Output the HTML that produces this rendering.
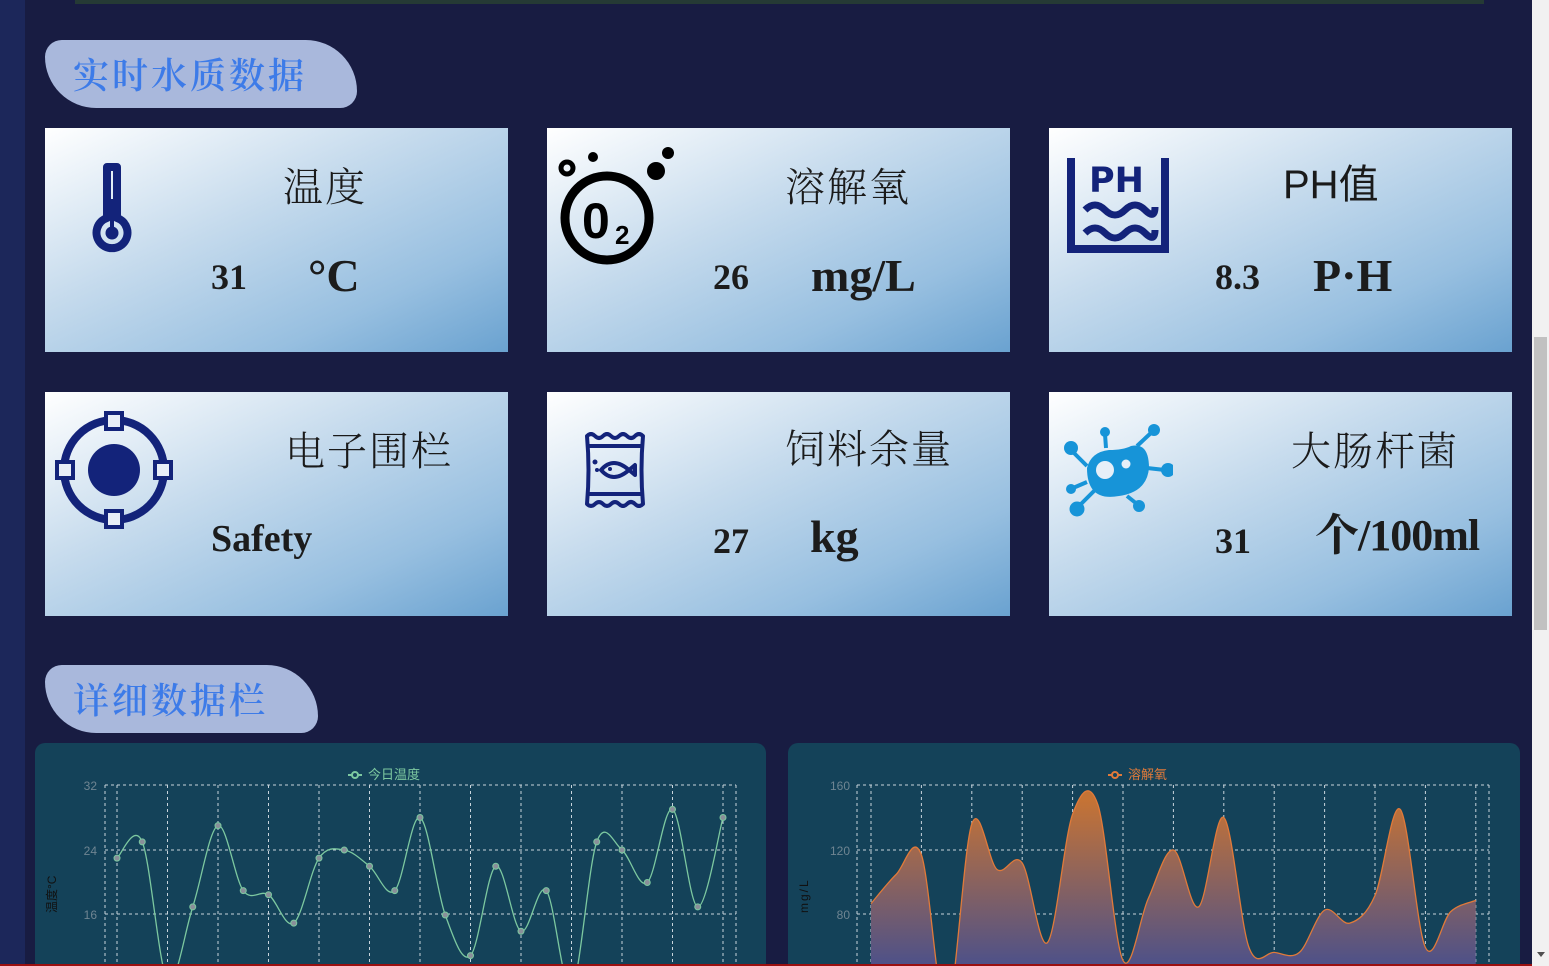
<!DOCTYPE html>
<html><head><meta charset="utf-8">
<style>
*{margin:0;padding:0;box-sizing:border-box}
html{width:1549px;height:966px;overflow:hidden}
body{width:1549px;height:966px;overflow:hidden;background:#181c42;position:relative;font-family:"Liberation Serif","Noto Serif CJK SC",serif}
.side{position:absolute;left:0;top:0;width:25px;height:966px;background:#1c275a}
.topimg{position:absolute;left:75px;top:0;width:1409px;height:4px;background:#253a35}
.scroll{position:absolute;left:1532px;top:0;width:17px;height:966px;background:#f1f1f1}
.thumb{position:absolute;left:1534px;top:337px;width:13px;height:293px;background:#c1c1c1}
.pill{position:absolute;background:#a9b8dc;color:#3d7be8;font-family:"Noto Serif CJK SC",serif;font-weight:600;font-size:36px;letter-spacing:3px;border-radius:18px 55px 18px 55px/18px 55px 18px 55px;padding-left:28px;line-height:68px;height:68px}
.card{position:absolute;width:463px;height:224px;background:linear-gradient(155deg,#ffffff 0%,#c6dbed 40%,#97bfe0 75%,#6aa2d0 100%);overflow:hidden}
.t{position:absolute;font-family:"Noto Serif CJK SC",serif;font-size:40px;color:#1a1a1a;letter-spacing:2px;line-height:1;font-weight:300}
.n{position:absolute;font-weight:bold;font-size:36px;color:#1c1c1c;line-height:1}
.u{position:absolute;font-weight:bold;font-size:46px;color:#1c1c1c;line-height:1}
.ic{position:absolute}
.panel{position:absolute;top:743px;height:223px;background:#144259;border-radius:10px 10px 0 0}
.red{position:absolute;left:0;top:964px;width:1532px;height:2px;background:#9a1010}
</style></head><body>
<div class="side"></div>
<div class="topimg"></div>

<div class="pill" style="left:45px;top:40px;width:312px">实时水质数据</div>

<div class="card" style="left:45px;top:128px">
<svg class="ic" style="left:45px;top:35px" width="44" height="92" viewBox="0 0 44 92"><path d="M17 4h10v51a15.5 15.5 0 1 1 -10 0z" fill="none" stroke="#13237a" stroke-width="8" stroke-linejoin="round"/><rect x="20" y="36" width="4" height="30" fill="#13237a"/><circle cx="22" cy="70" r="6.5" fill="#13237a"/></svg>
<div class="t" style="left:238px;top:37px">温度</div>
<div class="n" style="left:166px;top:131px">31</div>
<div class="u" style="left:263px;top:125px">°C</div>
</div>
<div class="card" style="left:547px;top:128px">
<svg class="ic" style="left:10px;top:18px" width="120" height="122" viewBox="0 0 120 122"><circle cx="10" cy="22" r="6" fill="none" stroke="#000" stroke-width="5"/><circle cx="36" cy="11" r="5" fill="#000"/><circle cx="99" cy="25" r="9" fill="#000"/><circle cx="111" cy="7" r="6" fill="#000"/><circle cx="50" cy="72" r="42" fill="none" stroke="#000" stroke-width="9"/><text x="25" y="92" font-family="Liberation Sans,sans-serif" font-size="50" font-weight="bold" transform="scale(1,1)">0</text><text x="58" y="98" font-family="Liberation Sans,sans-serif" font-size="26" font-weight="bold">2</text></svg>
<div class="t" style="left:238px;top:37px">溶解氧</div>
<div class="n" style="left:166px;top:131px">26</div>
<div class="u" style="left:264px;top:125px">mg/L</div>
</div>
<div class="card" style="left:1049px;top:128px">
<svg class="ic" style="left:18px;top:30px" width="102" height="96" viewBox="0 0 102 96"><path d="M4 0v91h94V0" fill="none" stroke="#13237a" stroke-width="8"/><text x="22" y="34" font-family="DejaVu Sans,sans-serif" font-size="35" font-weight="bold" fill="#13237a">PH</text><path d="M18 52q10-10 20 0t20 0t20 0t10-3M18 75q10-10 20 0t20 0t20 0t10-3" fill="none" stroke="#13237a" stroke-width="7"/></svg>
<div class="t" style="left:234px;top:37px;font-family:'Liberation Sans','Noto Sans CJK SC',sans-serif;font-weight:400;letter-spacing:0">PH值</div>
<div class="n" style="left:166px;top:131px">8.3</div>
<div class="u" style="left:264px;top:125px">P·H</div>
</div>

<div class="card" style="left:45px;top:392px">
<svg class="ic" style="left:10px;top:19px" width="118" height="118" viewBox="0 0 118 118"><circle cx="59" cy="59" r="50" fill="none" stroke="#13237a" stroke-width="8"/><circle cx="59" cy="59" r="26" fill="#13237a"/><g fill="#e8eef7" stroke="#13237a" stroke-width="4"><rect x="51" y="2" width="16" height="16"/><rect x="51" y="100" width="16" height="16"/><rect x="2" y="51" width="16" height="16"/><rect x="100" y="51" width="16" height="16"/></g></svg>
<div class="t" style="left:240px;top:37px">电子围栏</div>
<div class="u" style="left:166px;top:128px;font-size:38px">Safety</div>
</div>
<div class="card" style="left:547px;top:392px">
<svg class="ic" style="left:36px;top:40px" width="66" height="76" viewBox="0 0 66 76"><g fill="none" stroke="#13237a" stroke-width="4" stroke-linejoin="round"><path d="M4 4q4-4 8 0t8 0t8 0t8 0t8 0t8 0t8 0q-3 34 0 68q-4 4-8 0t-8 0t-8 0t-8 0t-8 0t-8 0t-8 0q3-34 0-68z"/><path d="M5 14h56M5 62h56"/><path d="M18 38q12-14 28 0l6-5v10l-6-5q-16 14-28 0z"/></g><circle cx="12" cy="30" r="2.5" fill="#13237a"/><circle cx="14" cy="38" r="2" fill="#13237a"/><circle cx="27" cy="37" r="2" fill="#13237a"/></svg>
<div class="t" style="left:238px;top:35px">饲料余量</div>
<div class="n" style="left:166px;top:131px">27</div>
<div class="u" style="left:263px;top:122px">kg</div>
</div>
<div class="card" style="left:1049px;top:392px">
<svg class="ic" style="left:14px;top:30px" width="110" height="96" viewBox="0 0 110 96"><g stroke="#1794d8" stroke-width="4" fill="none"><path d="M24 44L9 29M43 26L42 12M74 24L89 10M84 46L102 48M64 74L74 82M32 68L16 84M24 60L10 66"/></g><g fill="#1794d8"><circle cx="8" cy="26" r="7"/><circle cx="42" cy="10" r="5"/><circle cx="91" cy="8" r="6"/><circle cx="105" cy="48" r="7"/><circle cx="76" cy="84" r="6"/><circle cx="14" cy="87" r="7.5"/><circle cx="8" cy="67" r="5"/></g><path d="M24 46q4-16 22-18q14 0 22-4q18-4 18 22q-2 24-30 28q-32 6-32-28z" fill="#1794d8"/><circle cx="42" cy="48" r="9" fill="#e6eff8"/><circle cx="63" cy="42" r="4.5" fill="#e6eff8"/></svg>
<div class="t" style="left:242px;top:37px">大肠杆菌</div>
<div class="n" style="left:166px;top:131px">31</div>
<div class="u" style="left:266px;top:122px;font-size:44px;font-family:'Liberation Serif','Noto Serif CJK SC',serif;letter-spacing:-1px">个/100ml</div>
</div>

<div class="pill" style="left:45px;top:665px;width:273px">详细数据栏</div>

<div class="panel" style="left:35px;width:731px"></div>
<div class="panel" style="left:788px;width:732px"></div>

<svg style="position:absolute;left:0;top:0" width="1549" height="966">
<defs><linearGradient id="g2b" x1="0" y1="800" x2="0" y2="966" gradientUnits="userSpaceOnUse"><stop offset="0" stop-color="#c57335"/><stop offset="1" stop-color="#4d5189"/></linearGradient></defs>
<g id="c1grid" stroke="#c8d4dc" stroke-width="1" stroke-dasharray="3,3" fill="none"></g>
<g id="c2grid" stroke="#c8d4dc" stroke-width="1" stroke-dasharray="3,3" fill="none"></g>
<path id="p2f" fill="url(#g2b)"/>
<path id="p2" fill="none" stroke="#e07a3a" stroke-width="1.3"/>
<path id="p1" fill="none" stroke="#7cc8a0" stroke-width="1.3"/>
<g id="pts"></g>
<g font-family="Liberation Sans,Noto Sans CJK SC,sans-serif" font-size="12" fill="#6f8592">
<text x="97" y="790" text-anchor="end">32</text><text x="97" y="855" text-anchor="end">24</text><text x="97" y="919" text-anchor="end">16</text>
<text x="850" y="790" text-anchor="end">160</text><text x="850" y="855" text-anchor="end">120</text><text x="850" y="919" text-anchor="end">80</text>
</g>
<g font-family="Liberation Sans,Noto Sans CJK SC,sans-serif" font-size="13">
<path d="M348 775h14" stroke="#7cc8a0" stroke-width="2"/><circle cx="355" cy="775" r="3" fill="#144259" stroke="#7cc8a0" stroke-width="2"/>
<text x="368" y="779" fill="#7cc8a0">今日温度</text>
<path d="M1108 775h14" stroke="#e07a3a" stroke-width="2"/><circle cx="1115" cy="775" r="3" fill="#144259" stroke="#e07a3a" stroke-width="2"/>
<text x="1128" y="779" fill="#e07a3a">溶解氧</text>
<text transform="translate(56,913) rotate(-90)" fill="#111" font-size="12">温度°C</text>
<text transform="translate(808,913) rotate(-90)" fill="#111" font-size="12" letter-spacing="2">mg/L</text>
</g>
</svg>

<div class="red"></div>
<div class="scroll"></div>
<div class="thumb"></div>
<div style="position:absolute;left:1537px;top:952px;width:0;height:0;border-left:4px solid transparent;border-right:4px solid transparent;border-top:5px solid #505050"></div>

<script>
function cr(p){var d="M"+p[0][0]+" "+p[0][1];for(var i=0;i<p.length-1;i++){var p0=p[i-1]||p[i],p1=p[i],p2=p[i+1],p3=p[i+2]||p2;var c1=[p1[0]+(p2[0]-p0[0])/6,p1[1]+(p2[1]-p0[1])/6],c2=[p2[0]-(p3[0]-p1[0])/6,p2[1]-(p3[1]-p1[1])/6];d+="C"+c1[0]+" "+c1[1]+" "+c2[0]+" "+c2[1]+" "+p2[0]+" "+p2[1];}return d;}
var v1=[23,25,8,17,27,19,18.5,15,23,24,22,19,28,16,11,22,14,19,7,25,24,20,29,17,28];
var p1=v1.map(function(v,i){return [117+i*25.25,785+(32-v)*8.125]});
document.getElementById('p1').setAttribute('d',cr(p1));
var pts="";
p1.forEach(function(p){pts+='<circle cx="'+p[0]+'" cy="'+p[1]+'" r="3" fill="#8a8f9a" stroke="#7cc8a0" stroke-width="1"/>';});
document.getElementById('pts').innerHTML=pts;
var h='<path d="M105 785V966M736 785V966"/>';
for(var i=0;i<13;i++){var x=117+i*50.5;h+='<path d="M'+x+' 785V966"/>';}
[785,850,914].forEach(function(y){h+='<path d="M105 '+y+'H736"/>';});
document.getElementById('c1grid').innerHTML=h;
var v2=[87,105,117,20,136,108,112,63,142,148,52,90,120,85,140,60,57,57,83,75,92,145,60,82,89];
var p2=v2.map(function(v,i){return [871+i*25.2,785+(160-v)*1.625]});
var d2=cr(p2);document.getElementById('p2').setAttribute('d',d2);
document.getElementById('p2f').setAttribute('d',d2+"L"+p2[24][0]+" 980L871 980Z");
h='<path d="M857 785V966M1489 785V966"/>';
for(var i=0;i<13;i++){var x=871+i*50.4;h+='<path d="M'+x+' 785V966"/>';}
[785,850,914].forEach(function(y){h+='<path d="M857 '+y+'H1489"/>';});
document.getElementById('c2grid').innerHTML=h;
</script>
</body></html>
